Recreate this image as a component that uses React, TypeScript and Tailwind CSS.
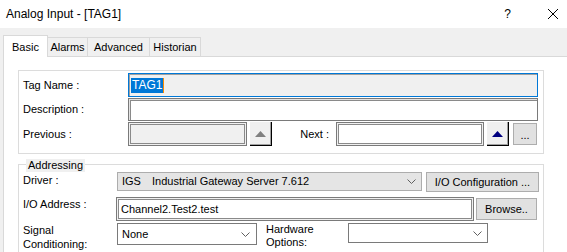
import React from "react";

function Chevron() {
  return (
    <svg width="9" height="5" viewBox="0 0 9 5" className="shrink-0">
      <polyline points="0.5,0.5 4.5,4.5 8.5,0.5" fill="none" stroke="#606060" strokeWidth="1" />
    </svg>
  );
}

function UpButton({ color }: { color: string }) {
  return (
    <div className="w-[22px] h-[24px] bg-[#f0f0f0] border-r border-b border-r-black border-b-black shadow-[inset_-1px_-1px_0_#a0a0a0] flex items-center justify-center shrink-0">
      <svg width="11" height="6" viewBox="0 0 11 6">
        <polygon points="0,6 11,6 5.5,0" fill={color} />
      </svg>
    </div>
  );
}

export default function App() {
  return (
    <div className="w-[567px] h-[252px] overflow-hidden bg-[#f0f0f0] flex flex-col text-black font-['Liberation_Sans',Arial,sans-serif]">
      {/* Title bar */}
      <div className="h-[28px] bg-white flex items-center shrink-0">
        <span className="ml-[6px] text-[12px] leading-none">Analog Input - [TAG1]</span>
        <span className="ml-auto text-[12px] leading-none">?</span>
        <svg width="10" height="10" viewBox="0 0 10 10" className="ml-[37px] mr-[9px]">
          <line x1="0" y1="0" x2="10" y2="10" stroke="#000" strokeWidth="1" />
          <line x1="10" y1="0" x2="0" y2="10" stroke="#000" strokeWidth="1" />
        </svg>
      </div>

      {/* Tab strip */}
      <div className="h-[28px] flex items-end pl-[3px] shrink-0 text-[11px]">
        <div className="relative z-10 -mb-[1px] w-[45px] h-[22px] bg-white border-t border-l border-r border-[#d9d9d9] flex items-start pt-[3px] pl-[8px]">
          Basic
        </div>
        <div className="w-[40px] h-[19px] border-t border-r border-[#d9d9d9] flex items-center justify-center pt-[1px]">
          Alarms
        </div>
        <div className="w-[62px] h-[19px] border-t border-r border-[#d9d9d9] flex items-center justify-center pt-[1px]">
          Advanced
        </div>
        <div className="w-[51px] h-[19px] border-t border-r border-[#d9d9d9] flex items-center justify-center pt-[1px]">
          Historian
        </div>
      </div>

      {/* Page */}
      <div className="flex-1 ml-[3px] bg-white border-t border-l border-[#d9d9d9] pl-[14px] pt-[13px] text-[11px]">
        {/* Group 1 */}
        <div className="w-[526px] h-[84px] border border-[#dcdcdc] pt-[2px] pl-[4px] flex flex-col gap-[1px]">
          <div className="flex items-center h-[24px]">
            <div className="w-[105px]">Tag Name :</div>
            <div className="w-[410px] h-[24px] border border-[#0078d7] bg-[#f0f0f0] shadow-[inset_1px_1px_0_#a0a0a0] flex items-center pl-[2px]">
              <span className="bg-[#0078d7] text-white text-[12px] leading-[15px] px-[1px] border-r border-r-[#ff8c00]">TAG1</span>
            </div>
          </div>
          <div className="flex items-center h-[23px]">
            <div className="w-[105px]">Description :</div>
            <div className="w-[410px] h-[23px] border border-[#7a7a7a] bg-white shadow-[inset_1px_1px_0_#e3e3e3,inset_2px_2px_0_#8a8a8a]" />
          </div>
          <div className="flex items-center h-[24px]">
            <div className="w-[105px]">Previous :</div>
            <div className="w-[119px] h-[24px] border border-[#7a7a7a] bg-[#f0f0f0] shadow-[inset_0_0_0_1px_#f0f0f0,inset_0_0_0_2px_#8a8a8a]" />
            <div className="ml-[3px]">
              <UpButton color="#808080" />
            </div>
            <div className="w-[64px] text-right pr-[7px]">Next :</div>
            <div className="w-[148px] h-[24px] border border-[#7a7a7a] bg-white shadow-[inset_0_0_0_1px_#f0f0f0,inset_0_0_0_2px_#8a8a8a]" />
            <div className="ml-[3px]">
              <UpButton color="#000080" />
            </div>
            <div className="ml-[4px] w-[24px] h-[22px] bg-[#e1e1e1] border border-[#adadad] flex items-center justify-center leading-none pt-[3px]">
              ...
            </div>
          </div>
        </div>

        {/* Group 2 */}
        <div className="relative mt-[10px] w-[526px] h-[120px] border border-[#dcdcdc] pt-[7px] pl-[4px]">
          <div className="absolute -top-[6px] left-[7px] bg-[#f0f0f0] px-[2px] leading-[13px]">Addressing</div>
          <div className="flex items-start">
            <div className="w-[94px] leading-[13px] pt-[2px]">Driver :</div>
            <div className="w-[305px] h-[19px] bg-[#e5e5e5] border border-[#adadad] flex items-center pl-[4px] pr-[5px]">
              <span className="w-[30px]">IGS</span>
              <span>Industrial Gateway Server 7.612</span>
              <span className="ml-auto">
                <Chevron />
              </span>
            </div>
            <div className="ml-[4px] w-[113px] h-[20px] bg-[#e1e1e1] border border-[#adadad] flex items-center justify-center">
              I/O Configuration ...
            </div>
          </div>
          <div className="flex items-start mt-[5px]">
            <div className="w-[93px] leading-[13px] pt-[1px]">I/O Address :</div>
            <div className="w-[358px] h-[24px] border border-[#7a7a7a] bg-white shadow-[inset_0_0_0_1px_#f0f0f0,inset_0_0_0_2px_#8a8a8a] flex items-center pl-[4px]">
              Channel2.Test2.test
            </div>
            <div className="ml-[2px] mt-[1px] w-[61px] h-[22px] bg-[#e1e1e1] border border-[#adadad] flex items-center justify-center">
              Browse..
            </div>
          </div>
          <div className="flex items-start mt-[2px]">
            <div className="w-[94px] leading-[14px]">
              <div>Signal</div>
              <div>Conditioning:</div>
            </div>
            <div className="w-[140px] h-[22px] border border-[#7a7a7a] bg-white flex items-center pl-[4px] pr-[6px]">
              <span>None</span>
              <span className="ml-auto">
                <Chevron />
              </span>
            </div>
            <div className="ml-[9px] w-[82px] leading-[13px]">
              <div>Hardware</div>
              <div>Options:</div>
            </div>
            <div className="w-[140px] h-[20px] border border-[#7a7a7a] bg-white flex items-center pr-[5px]">
              <span className="ml-auto">
                <Chevron />
              </span>
            </div>
          </div>
        </div>
      </div>
    </div>
  );
}
